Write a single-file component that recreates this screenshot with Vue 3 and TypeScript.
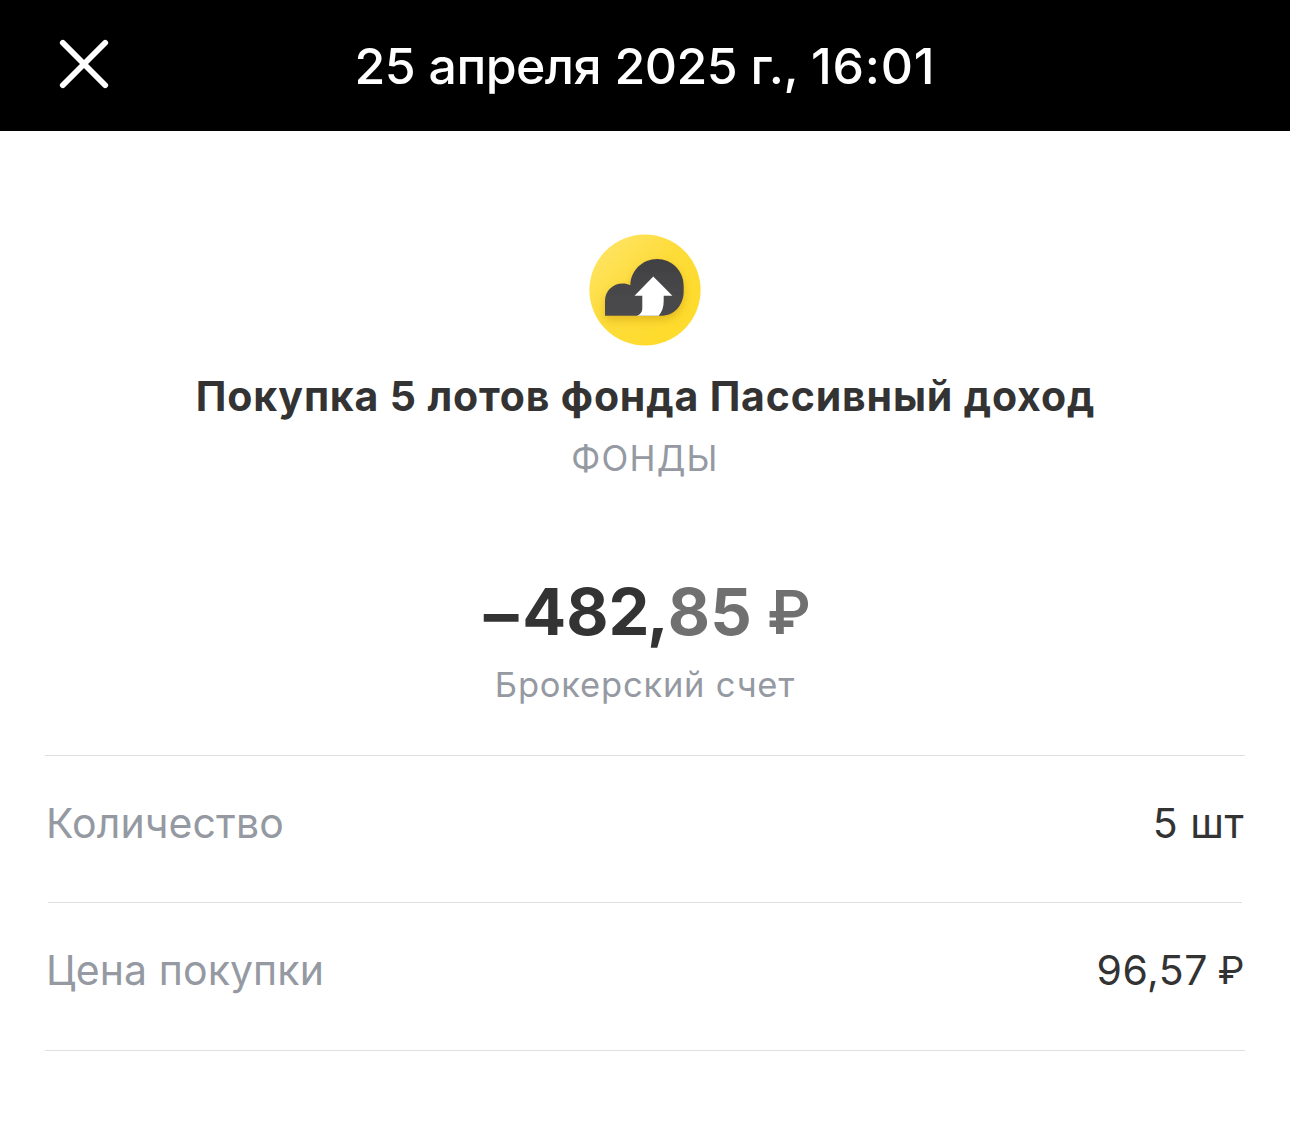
<script setup lang="ts">
interface Detail {
  label: string
  value: string
  currency?: string
}

const details: Detail[] = [
  { label: 'Количество', value: '5 шт' },
  { label: 'Цена покупки', value: '96,57', currency: '₽' },
]
</script>

<template>
  <div class="screen">
    <header class="bar">
      <button class="close" type="button" aria-label="Закрыть">
        <svg width="50" height="50" viewBox="0 0 50 50" fill="none" stroke="#fff" stroke-width="5.8" stroke-linecap="round">
          <path d="M3.8 3.8 46.2 46.2M46.2 3.8 3.8 46.2" />
        </svg>
      </button>
      <h1 class="date">25 апреля 2025 г., <span class="time">16:01</span></h1>
    </header>

    <main class="content">
      <svg class="logo" width="112" height="112" viewBox="0 0 112 112">
        <defs>
          <linearGradient id="disc" x1="0.1" y1="0.15" x2="0.75" y2="0.8">
            <stop offset="0" stop-color="#ffe360" />
            <stop offset="0.5" stop-color="#fddc3a" />
            <stop offset="1" stop-color="#fedb2d" />
          </linearGradient>
          <linearGradient id="cloud" x1="0" y1="0" x2="0" y2="1">
            <stop offset="0" stop-color="#414143" />
            <stop offset="1" stop-color="#4b4b4d" />
          </linearGradient>
          <filter id="shade" x="-30%" y="-30%" width="160%" height="170%">
            <feDropShadow dx="0" dy="4" stdDeviation="4.5" flood-color="#b88600" flood-opacity="0.4" />
          </filter>
        </defs>
        <circle cx="56" cy="56" r="55.6" fill="url(#disc)" />
        <path
          filter="url(#shade)"
          fill="url(#cloud)"
          d="M16 81.8V67.3C16 57 23.8 49.6 33.6 49.6c2.7 0 5.3.6 7.7 1.7C41.6 36.5 53.5 25 68 25c14.8 0 26.7 11.9 26.7 26.7V57.5C94.7 71 85.5 81.8 72 81.8Z"
        />
        <path fill="#fff" d="M64.3 42.6 83.4 61.7H74.7V67c0 6.5-1.8 11-5 14.8H47.7c3.6-1.2 5.6-3.6 5.6-7.3V61.7H45.5Z" />
      </svg>

      <h2 class="title">Покупка 5 лотов фонда Пассивный доход</h2>
      <p class="category">ФОНДЫ</p>

      <p class="amount">
        <span class="sign">–</span><span class="whole">482</span><span class="comma">,</span><span class="cents">85</span><span class="ruble">₽</span>
      </p>
      <p class="account">Брокерский счет</p>

      <dl class="details">
        <div v-for="item in details" :key="item.label" class="row">
          <dt>{{ item.label }}</dt>
          <dd>{{ item.value }}<span v-if="item.currency" class="unit">{{ item.currency }}</span></dd>
        </div>
      </dl>
    </main>
  </div>
</template>

<style>
body {
  background: #fff;
}
</style>

<style scoped>
.screen {
  width: 1290px;
  height: 1142px;
  overflow: hidden;
  background: #fff;
  color: #333;
  font-family: Inter, 'Liberation Sans', sans-serif;
}

h1,
h2,
p,
dl,
dd {
  margin: 0;
}

.bar {
  display: grid;
  grid-template-columns: 168px 1fr 168px;
  align-items: center;
  height: 131px;
  background: #000;
  color: #fff;
}

.close {
  display: flex;
  margin: 0 0 3px 59px;
  padding: 0;
  width: 50px;
  border: 0;
  background: none;
}

.date {
  text-align: center;
  font-size: 50px;
  font-weight: 500;
  line-height: 60px;
  letter-spacing: -0.55px;
  word-spacing: 0.6px;
  white-space: nowrap;
}

.time {
  letter-spacing: 0.8px;
}

.content {
  display: flex;
  flex-direction: column;
  align-items: center;
  padding: 103px 45px 0;
}

.title {
  margin-top: 22px;
  padding-left: 1px;
  font-size: 41px;
  font-weight: 700;
  line-height: 56px;
  letter-spacing: 0.84px;
  white-space: nowrap;
}

.category {
  margin-top: 12px;
  color: #9599a2;
  font-size: 35px;
  line-height: 44px;
  letter-spacing: 1.2px;
}

.amount {
  display: flex;
  margin-top: 92px;
  padding-left: 6px;
  font-size: 65px;
  font-weight: 700;
  line-height: 80px;
}

.sign {
  margin-right: 4.5px;
  transform: translateY(2px) scaleX(1.07);
}

.comma {
  margin-left: -2.5px;
  margin-right: -1px;
}

.cents,
.ruble {
  color: #707070;
}

.cents {
  letter-spacing: 0.3px;
}

.ruble {
  margin-left: 15px;
  font-size: 60px;
  font-weight: 600;
}

.account {
  margin-top: 11px;
  color: #9599a2;
  font-size: 34.5px;
  line-height: 44px;
  letter-spacing: 0.8px;
}

.details {
  align-self: stretch;
  margin-top: 48px;
  border-top: 1px solid #dddfe0;
  border-bottom: 1px solid #dddfe0;
}

.row {
  display: flex;
  justify-content: space-between;
  box-sizing: border-box;
  height: 147px;
  padding: 41px 1px 0;
  font-size: 41px;
  line-height: 53px;
}

.row:first-child {
  margin: 0 3px;
  border-bottom: 1px solid #dddfe0;
}

.row:first-child dt {
  margin-left: -3px;
}

.row:first-child dd {
  margin-right: -3px;
}

.row dt {
  color: #9599a2;
  letter-spacing: 0.1px;
}

.row dd {
  display: flex;
  letter-spacing: 0.5px;
}

.unit {
  margin: 0 -1px 0 10px;
  font-size: 38px;
}
</style>
